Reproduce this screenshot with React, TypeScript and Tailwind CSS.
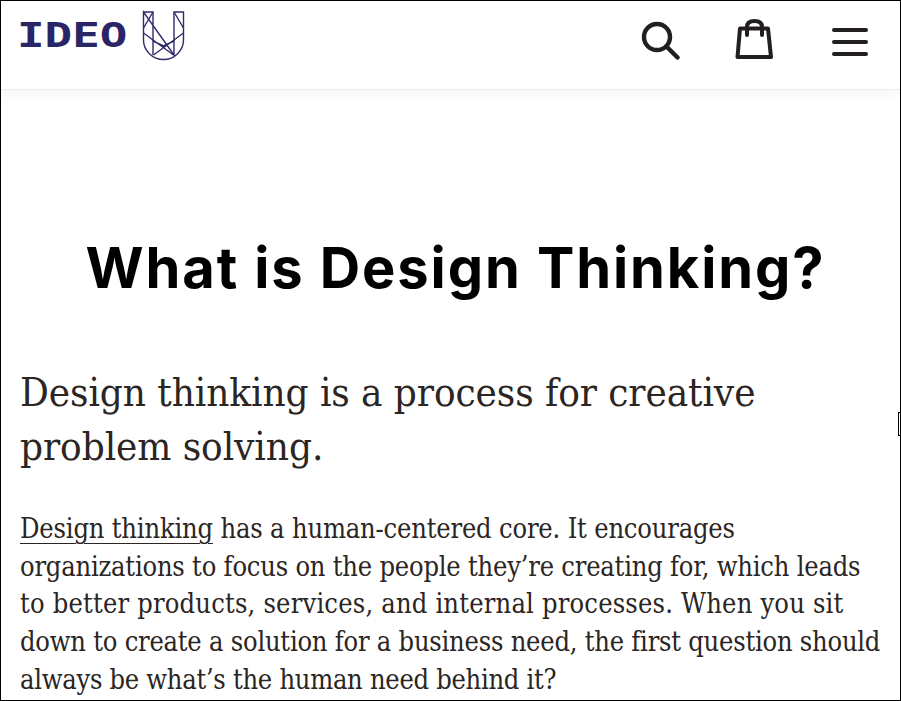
// App.tsx
import React from "react";

function Logo() {
  return (
    <div className="flex items-start">
      <div className="ml-[-2px] mt-[20px] w-[109px] origin-left scale-x-[1.39] whitespace-nowrap font-['DejaVu_Sans_Mono',monospace] text-[33px] leading-[30px] font-bold text-[#2a2566]">
        IDEO
      </div>
      <svg width="44" height="52" viewBox="0 0 44 52" fill="none" stroke="#2f2a6e" strokeWidth="1.4" className="ml-[16px] mt-[9px]">
        <path d="M1.500 2h9.500v43M32 45V2H41.500V30c0 10.500-9 19.500-20 19.500S1.500 40.500 1.500 30V2Z" />
        <path d="M1.500 18 L11 2 M41.500 18 L32 2" />
        <path d="M1.500 23 L31.500 45 M41.500 23 L11.500 45 M11 31 L21.500 36 L32 31" />
      </svg>
    </div>
  );
}

function SearchIcon() {
  return (
    <svg width="40" height="40" viewBox="0 0 40 40" fill="none" stroke="#231f20" strokeWidth="4.400" strokeLinecap="round">
      <circle cx="17" cy="16" r="13" />
      <path d="M27 26 L37.500 36.500" />
    </svg>
  );
}

function BagIcon() {
  return (
    <svg width="40" height="42" viewBox="0 0 40 42" fill="none" stroke="#231f20" strokeWidth="4" strokeLinecap="round" strokeLinejoin="round">
      <path d="M6 10.500H34L37 39H3.500Z" />
      <path d="M13 17V9C13 5 16 3 20.500 3S28 5 28 9V17" />
    </svg>
  );
}

function MenuIcon() {
  return (
    <div className="flex w-[36px] flex-col gap-[8px]">
      <div className="h-[4px] rounded-full bg-[#231f20]" />
      <div className="h-[4px] rounded-full bg-[#231f20]" />
      <div className="h-[4px] rounded-full bg-[#231f20]" />
    </div>
  );
}

export default function App() {
  return (
    <div className="relative h-[701px] overflow-hidden border border-black bg-white text-[#2b2523]">
      {/* Header */}
      <header className="flex h-[89px] items-start justify-between border-b border-[#ebebeb] pl-[18px] pr-[32px] shadow-[0_4px_12px_rgba(0,0,0,0.04)]">
        <Logo />
        <div className="flex items-start">
          <div className="mt-[20px]"><SearchIcon /></div>
          <div className="ml-[54px] mt-[17px]"><BagIcon /></div>
          <div className="ml-[58px] mt-[27px]"><MenuIcon /></div>
        </div>
      </header>

      <main className="px-[19px] font-['DejaVu_Serif',serif] [font-stretch:condensed]">
        <h1 className="mt-[144px] pl-[10px] text-center font-['Inter',sans-serif] text-[56px] leading-[68px] font-bold tracking-[1.9px] text-black [font-stretch:normal]">
          What is Design Thinking?
        </h1>
        <p className="mt-[63px] max-w-[760px] text-[40px] leading-[54px] tracking-[-0.07px]">
          Design thinking is a process for creative problem solving.
        </p>
        {/* line breaks held to the reference, the stand-in serif sets a little unevenly */}
        <p className="mt-[37px] whitespace-nowrap text-[27px] leading-[37.7px]">
          <span className="block tracking-[-0.17px]">
            <span className="underline decoration-1 underline-offset-[5px]">Design thinking</span> has a human-centered core. It encourages
          </span>
          <span className="block tracking-[-0.2px]">organizations to focus on the people they’re creating for, which leads</span>
          <span className="block tracking-[0.2px]">to better products, services, and internal processes. When you sit</span>
          <span className="block tracking-[-0.22px]">down to create a solution for a business need, the first question should</span>
          <span className="block tracking-[-0.27px]">always be what’s the human need behind it?</span>
        </p>
      </main>

      {/* text cursor caught in the capture */}
      <div className="absolute right-[-1px] top-[411px] h-[24px] w-[3px] border-y border-l border-black" />
    </div>
  );
}
